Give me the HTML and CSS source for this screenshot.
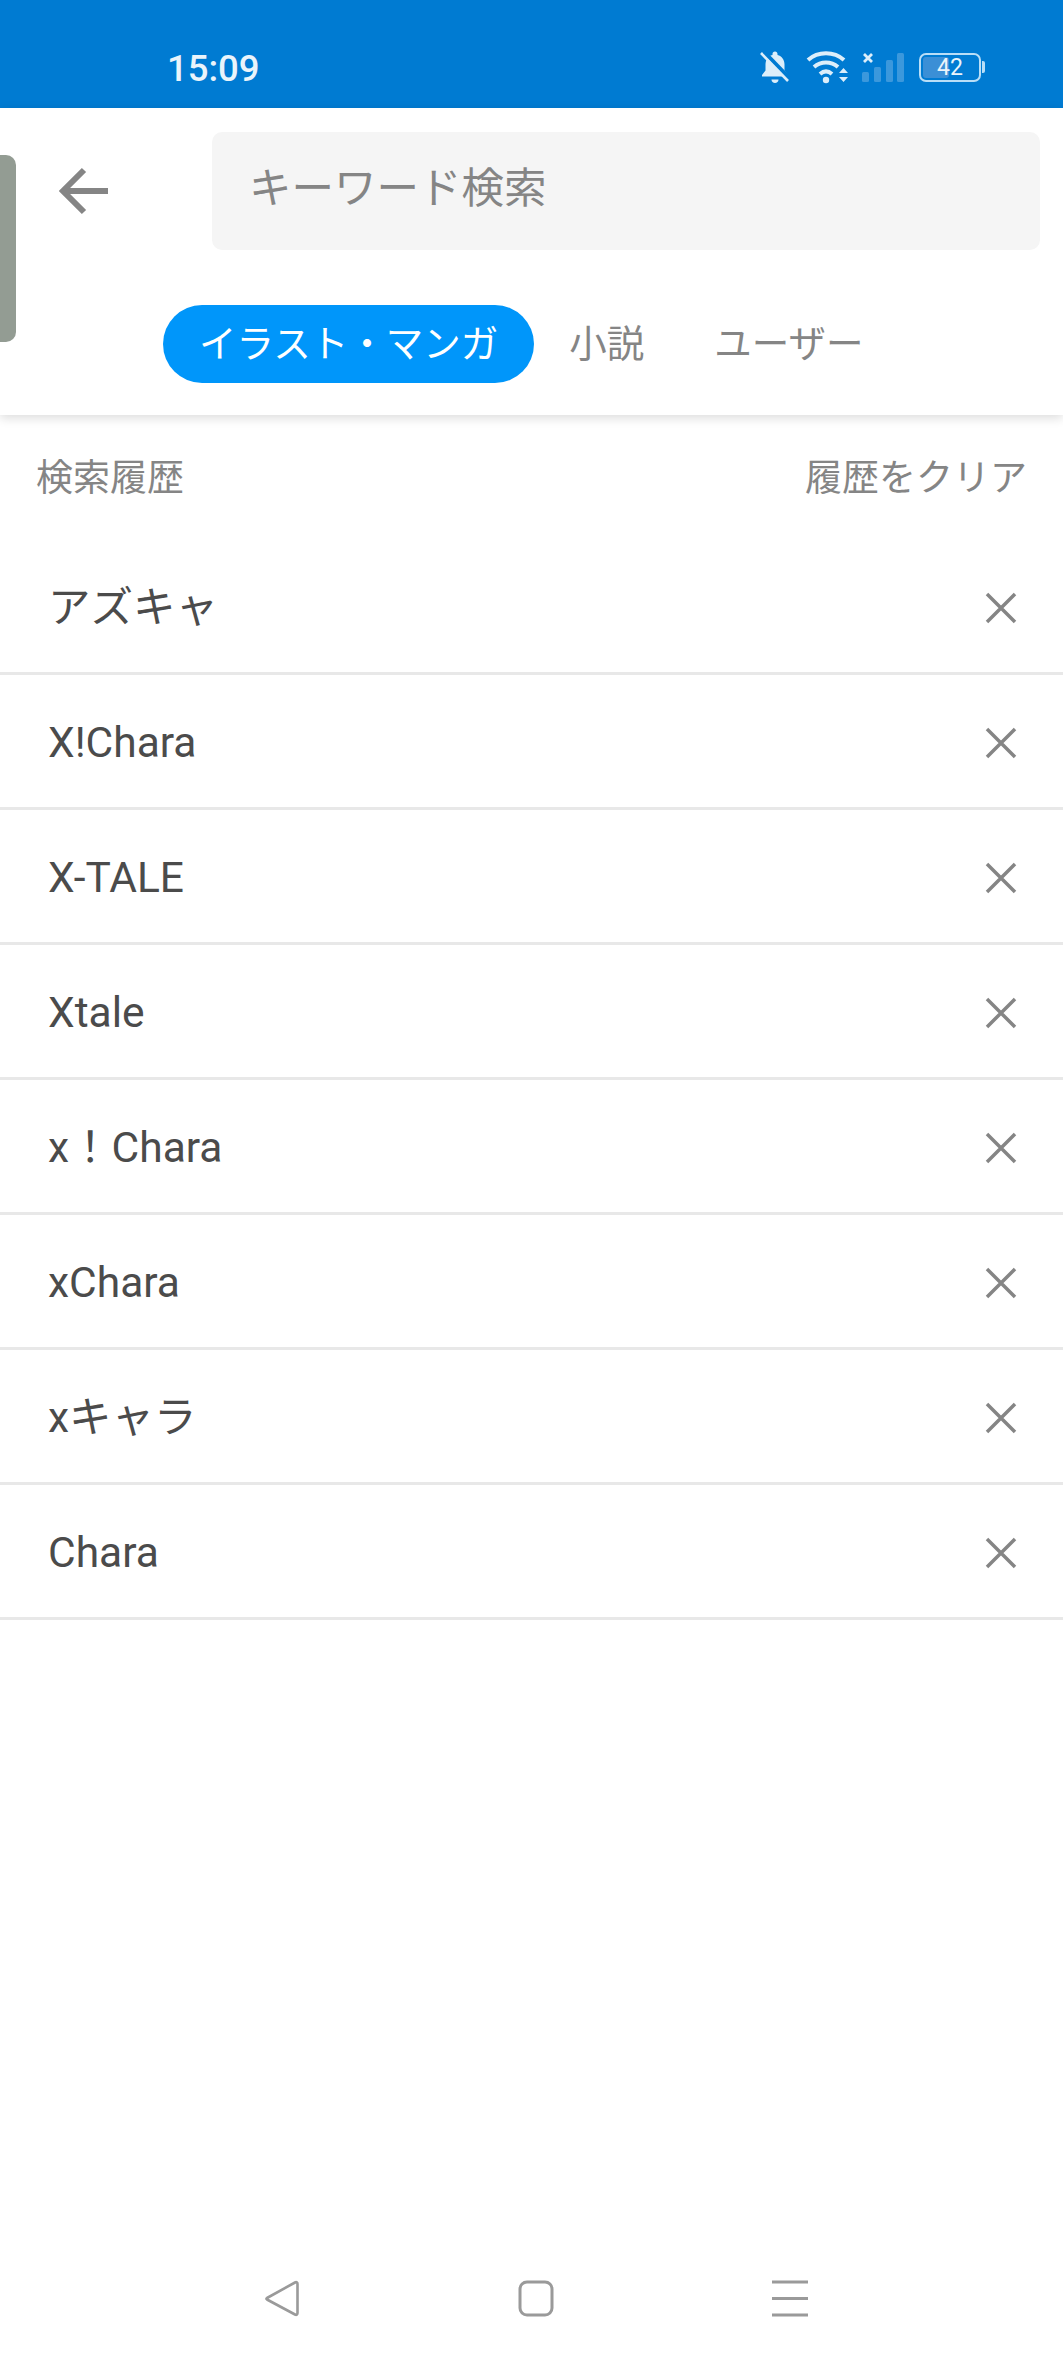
FILE: index.html
```html
<!DOCTYPE html>
<html lang="ja">
<head>
  <meta charset="UTF-8">
  <meta name="viewport" content="width=device-width, initial-scale=1.0">
  <title>検索</title>
  <link rel="stylesheet" href="styles.css">
</head>
<body>
  <div id="main">
    <div class="status">
      <span class="time">15:09</span>
      <div class="status-icons">
        <svg class="bell" width="32" height="34" viewBox="0 0 32 34">
          <path d="M13.500 4c0-1.500 1-2.500 2.500-2.500s2.500 1 2.500 2.500v1c4.500 1.200 7 5 7 9.500v6l3.500 4.500v1.500H3v-1.500l3.500-4.500v-6c0-2 .5-4 1.500-5.500 1.200-2 3-3.400 5.500-4z" fill="#dceefa"/>
          <path d="M12.500 29.500h7c0 2-1.500 3.500-3.500 3.500s-3.500-1.500-3.500-3.500z" fill="#dceefa"/>
          <path d="M5 2l27 28" stroke="#007bd2" stroke-width="4"/>
          <path d="M2 3l27 28" stroke="#dceefa" stroke-width="2.600"/>
        </svg>
        <svg class="wifi" width="44" height="36" viewBox="0 0 44 36">
          <path d="M2 11c10-9 26-9 36 0M8 18c7-6 17-6 24 0M14 25c4-3.500 8-3.500 12 0" fill="none" stroke="#dceefa" stroke-width="4"/>
          <circle cx="20" cy="31" r="3.200" fill="#dceefa"/>
          <path d="M33 24l4.500-5 4.500 5zM33 28h9l-4.500 5z" fill="#dceefa"/>
        </svg>
        <svg class="signal" width="44" height="32" viewBox="0 0 44 32">
          <path d="M3 3l8 8M11 3l-8 8" stroke="#dceefa" stroke-width="2.800"/>
          <rect x="1" y="21" width="7" height="10" rx="1.500" fill="#3b98dc"/>
          <rect x="13" y="16" width="7" height="15" rx="1.500" fill="#3b98dc"/>
          <rect x="25" y="9" width="7" height="22" rx="1.500" fill="#3b98dc"/>
          <rect x="36" y="2" width="7" height="29" rx="1.500" fill="#3b98dc"/>
        </svg>
        <div class="battery">
          <div class="battery-body"><span class="battery-fill"></span><span class="battery-num">42</span></div>
          <span class="battery-nub"></span>
        </div>
      </div>
    </div>

    <div class="head">
      <div class="peek"></div>
      <div class="search-row">
        <svg class="back" width="50" height="48" viewBox="0 0 50 48">
          <path d="M26 3L5 24l21 21M5 24h45" fill="none" stroke="#858585" stroke-width="6"/>
        </svg>
        <div class="search-box">キーワード検索</div>
      </div>
      <div class="tabs">
        <span class="tab active">イラスト・マンガ</span>
        <span class="tab">小説</span>
        <span class="tab">ユーザー</span>
      </div>
    </div>

    <div class="history-head">
      <span>検索履歴</span>
      <span>履歴をクリア</span>
    </div>

    <ul class="history">
      <li><span>アズキャ</span><svg class="x" width="32" height="32" viewBox="0 0 32 32"><path d="M2 2l28 28M30 2L2 30"/></svg></li>
      <li><span>X!Chara</span><svg class="x" width="32" height="32" viewBox="0 0 32 32"><path d="M2 2l28 28M30 2L2 30"/></svg></li>
      <li><span>X-TALE</span><svg class="x" width="32" height="32" viewBox="0 0 32 32"><path d="M2 2l28 28M30 2L2 30"/></svg></li>
      <li><span>Xtale</span><svg class="x" width="32" height="32" viewBox="0 0 32 32"><path d="M2 2l28 28M30 2L2 30"/></svg></li>
      <li><span>x！Chara</span><svg class="x" width="32" height="32" viewBox="0 0 32 32"><path d="M2 2l28 28M30 2L2 30"/></svg></li>
      <li><span>xChara</span><svg class="x" width="32" height="32" viewBox="0 0 32 32"><path d="M2 2l28 28M30 2L2 30"/></svg></li>
      <li><span>xキャラ</span><svg class="x" width="32" height="32" viewBox="0 0 32 32"><path d="M2 2l28 28M30 2L2 30"/></svg></li>
      <li><span>Chara</span><svg class="x" width="32" height="32" viewBox="0 0 32 32"><path d="M2 2l28 28M30 2L2 30"/></svg></li>
    </ul>

    <div class="nav">
      <svg width="36" height="37" viewBox="0 0 36 37"><path d="M3 18L31 2.500c1.500-.8 2.500 0 2.500 1.500v29c0 1.500-1 2.300-2.500 1.500L3 19.500c-.8-.5-.8-1 0-1.500z" fill="none" stroke="#9a9a9a" stroke-width="2.600"/></svg>
      <svg width="36" height="37" viewBox="0 0 36 37"><rect x="2" y="2" width="32" height="33" rx="7" fill="none" stroke="#9a9a9a" stroke-width="3"/></svg>
      <svg width="36" height="37" viewBox="0 0 36 37"><path d="M0 2h36M0 18.500h36M0 35h36" stroke="#9a9a9a" stroke-width="3"/></svg>
    </div>
  </div>
</body>
</html>
```

FILE: styles.css
```css
* {
  box-sizing: border-box;
}
body {
  margin: 0;
  background: #fff;
}
#main {
  display: flex;
  flex-direction: column;
  width: 1063px;
  height: 2364px;
  overflow: hidden;
  font-family: Roboto, "Noto Sans CJK JP", sans-serif;
}
.status {
  display: flex;
  align-items: center;
  justify-content: space-between;
  height: 108px;
  padding: 26px 78px 0 167px;
  background: #007bd2;
  color: #eaf4fb;
  flex-shrink: 0;
}
.time {
  font-size: 36.500px;
  font-weight: 500;
  margin-top: 3px;
}
.status-icons {
  display: flex;
  align-items: center;
}
.wifi {
  margin-left: 15px;
}
.signal {
  margin-left: 11px;
}
.battery {
  display: flex;
  align-items: center;
  margin-left: 14px;
}
.battery-body {
  position: relative;
  width: 62px;
  height: 29px;
  border: 2px solid #b9def7;
  border-radius: 7px;
  display: flex;
  align-items: center;
  justify-content: center;
  overflow: hidden;
}
.battery-fill {
  position: absolute;
  left: 2px;
  top: 2px;
  bottom: 2px;
  width: 26px;
  background: #3b8fd6;
  border-radius: 3px;
}
.battery-num {
  position: relative;
  font-size: 23px;
  color: #eaf4fb;
}
.battery-nub {
  width: 3px;
  height: 12px;
  margin-left: 1px;
  background: #b9def7;
  border-radius: 0 2px 2px 0;
}
.head {
  position: relative;
  height: 307px;
  padding: 24px 23px 0 58px;
  background: #fff;
  box-shadow: 0 3px 10px rgba(0, 0, 0, 0.14);
  flex-shrink: 0;
}
.peek {
  position: absolute;
  left: -10px;
  top: 47px;
  width: 26px;
  height: 187px;
  background: #939c93;
  border-radius: 10px;
}
.search-row {
  display: flex;
  align-items: center;
}
.back {
  flex-shrink: 0;
}
.search-box {
  flex: 1;
  height: 118px;
  margin-left: 104px;
  padding-left: 37px;
  background: #f5f5f5;
  border-radius: 10px;
  color: #858585;
  font-size: 42.500px;
  line-height: 114px;
}
.tabs {
  display: flex;
  align-items: center;
  margin: 55px 0 0 105px;
  font-size: 37.500px;
  color: #858585;
}
.tab {
  height: 78px;
  line-height: 78px;
  padding: 0 35px;
}
.tab.active {
  padding: 0 36px;
  border-radius: 39px;
  background: #0096fa;
  color: #fff;
}
.history-head {
  display: flex;
  justify-content: space-between;
  align-items: center;
  height: 125px;
  padding: 0 36px 6px;
  font-size: 37px;
  color: #858585;
  flex-shrink: 0;
}
.history {
  list-style: none;
  margin: 0;
  padding: 0;
  flex: 1;
  font-size: 42.500px;
  line-height: 50px;
  color: #4b4b4b;
}
.history li {
  display: flex;
  align-items: center;
  justify-content: space-between;
  height: 135px;
  padding: 3px 46px 0 48px;
  border-bottom: 3px solid #e8e8e8;
}
.x {
  fill: none;
  stroke: #858585;
  stroke-width: 3.500;
}
.nav {
  display: flex;
  justify-content: space-between;
  height: 128px;
  padding: 44px 255px 0 264px;
  flex-shrink: 0;
}
```
